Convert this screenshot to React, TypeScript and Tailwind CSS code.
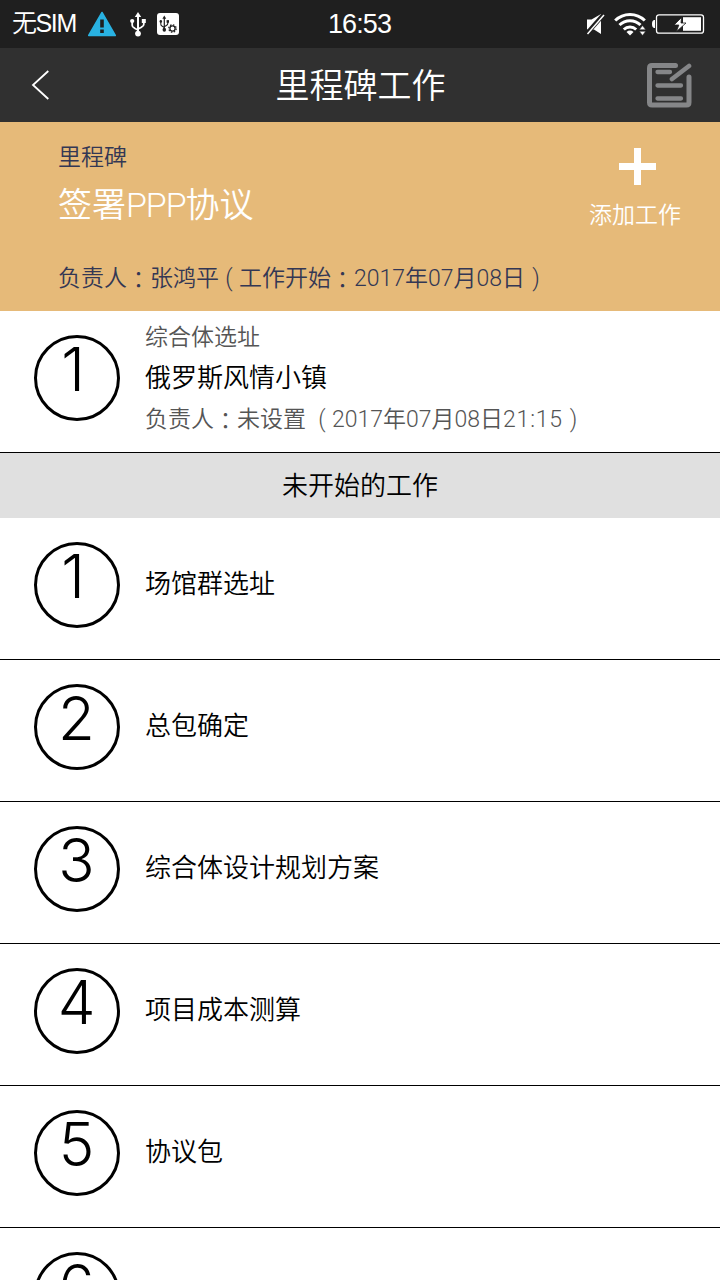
interface WorkItem {
  id: number;
  name: string;
}

const PENDING_WORKS: WorkItem[] = [
  { id: 1, name: '场馆群选址' },
  { id: 2, name: '总包确定' },
  { id: 3, name: '综合体设计规划方案' },
  { id: 4, name: '项目成本测算' },
  { id: 5, name: '协议包' },
  { id: 6, name: '' },
];

function UsbGlyph() {
  return (
    <>
      <path d="M8 3v18" stroke="currentColor" strokeWidth="2" fill="none" />
      <path d="M8 0l3.2 5H4.8z" fill="currentColor" />
      <path d="M2.2 9v4.2c0 1.6 1 2.4 2.4 3L8 18M13.8 9v3.2c0 1.6-1 2.4-2.4 3L8 17" stroke="currentColor" strokeWidth="1.8" fill="none" />
      <circle cx="2.2" cy="9" r="2.1" fill="currentColor" />
      <path d="M11.8 7h4v4h-4z" fill="currentColor" />
      <circle cx="8" cy="21.6" r="2.9" fill="currentColor" />
    </>
  );
}

function StatusBar() {
  return (
    <div className="grid h-12 shrink-0 grid-cols-3 items-center bg-[#1f1f1f] font-['Liberation_Sans','Noto_Sans_CJK_SC',sans-serif] text-white">
      <div className="flex items-center pl-[12px]">
        <span className="-mt-[2px] w-[65px] text-[25px] leading-[46px] tracking-[-1.4px] whitespace-nowrap">无SIM</span>
        <svg className="ml-[10px]" width="30" height="26" viewBox="0 0 30 26">
          <path d="M15 1.5L28.3 24.5H1.7z" fill="#29b2e2" stroke="#29b2e2" strokeWidth="1.5" strokeLinejoin="round" />
          <path d="M13.2 8.5h3.6v8h-3.6zM13.2 18.5h3.6V22h-3.6z" fill="#1f1f1f" />
        </svg>
        <svg className="ml-[13px]" width="16" height="25" viewBox="0 0 16 25">
          <UsbGlyph />
        </svg>
        <svg className="ml-[11px]" width="22" height="22" viewBox="0 0 22 22">
          <rect width="22" height="22" rx="3" fill="#fff" />
          <g transform="translate(2.5 2.5) scale(.6 .66)" className="text-[#1f1f1f]">
            <UsbGlyph />
          </g>
          <circle cx="15.5" cy="15.5" r="3.7" stroke="#1f1f1f" strokeWidth="1.3" strokeDasharray="1.5 1.4" fill="none" />
          <circle cx="15.5" cy="15.5" r="2.6" stroke="#1f1f1f" strokeWidth="1.3" fill="none" />
        </svg>
      </div>
      <span className="-mt-px pr-px text-center text-[27px] leading-[46px] tracking-[-0.9px]">16:53</span>
      <div className="flex items-center justify-end pr-[15px]">
        <svg className="mr-px" width="20" height="22" viewBox="0 0 20 22">
          <path d="M2 6.5h4.5L16 1v20l-7-4.5H2z" fill="#fff" />
          <path d="M1 21.5L19 1" stroke="#1f1f1f" strokeWidth="4.4" />
          <path d="M2.5 21L19 2" stroke="#fff" strokeWidth="1.5" />
        </svg>
        <svg className="ml-[8px]" width="33" height="24" viewBox="0 0 33 24">
          <g fill="none" stroke="#fff" strokeWidth="3">
            <path d="M1.2 8.5a21 21 0 0 1 29.6 0" />
            <path d="M5.5 13a15 15 0 0 1 21 0" />
            <path d="M9.8 17.5a9 9 0 0 1 12.4 0" />
          </g>
          <path d="M16 23.5l-3.5-3.6a5 5 0 0 1 7 0z" fill="#fff" />
          <path d="M28.5 13.5l3.3 4.3h-6.6zM28.5 23.5l3.3-4.3h-6.6z" fill="#fff" stroke="#1f1f1f" strokeWidth=".6" />
        </svg>
        <svg className="ml-[5px]" width="53" height="20" viewBox="0 0 53 20">
          <path d="M3 6v8H2Q0 13.5 0 10T2 6z" fill="#fff" />
          <rect x="4.5" y=".8" width="47" height="18.4" rx="2.5" fill="none" stroke="#fff" strokeWidth="1.3" />
          <path d="M31 3.2H49v13.6H31z" fill="#fff" />
          <path d="M29.5 3.5L22 11h4.8l-2.3 6.5L34 9h-5z" fill="#fff" stroke="#1f1f1f" strokeWidth=".8" />
        </svg>
      </div>
    </div>
  );
}

function TitleBar() {
  return (
    <header className="flex h-[74px] shrink-0 items-center justify-between bg-[#303030] pr-[28px] pl-[31px] text-white">
      <svg width="59" height="32" viewBox="0 0 59 32" fill="none" stroke="#fff" strokeWidth="1.8">
        <path d="M17.3 2L2 16l15.3 14" />
      </svg>
      <h1 className="pt-[3px] text-[34px] leading-[71px]">里程碑工作</h1>
      <svg className="ml-[16px]" width="45" height="45" viewBox="0 0 45 45" fill="none" stroke="#858688" strokeLinecap="round" strokeLinejoin="round">
        <path d="M28.5 2.5H5Q2.5 2.5 2.5 5v34.5q0 2.5 2.5 2.5H39.5q2.5 0 2.5-2.5V14" strokeWidth="5" />
        <path d="M42 3L25 16" strokeWidth="4.6" />
        <path d="M10.5 9H23M10.5 22.5H34M10.5 35.5H34" strokeWidth="4.3" />
      </svg>
    </header>
  );
}

function Colon() {
  return <span lang="zh-Hant" className="relative top-[2px] font-['Noto_Sans_CJK_TC']">：</span>;
}

function MilestoneBanner() {
  return (
    <section className="flex h-[189px] shrink-0 justify-between bg-[#e6ba79] pr-[39px] pl-[58px] text-[23px] text-[#333754]">
      <div className="flex flex-col whitespace-nowrap">
        <p className="mt-[19px] leading-[34px]">里程碑</p>
        <h2 className="mt-[5px] text-[34px] leading-[50px] text-white">
          签署<span className="tracking-[-1.1px]">PPP</span>协议
        </h2>
        <p className="mt-[29px] leading-[34px]">
          负责人<Colon />张鸿平
          <span className="inline-block w-[20px] text-center">(</span>
          工作开始<Colon />2017年07月08日
          <span className="inline-block w-[22px] text-center">)</span>
        </p>
      </div>
      <button type="button" className="flex flex-col items-center self-start pt-[26px] text-white">
        <svg className="mr-[-4px]" width="37" height="37" viewBox="0 0 37 37">
          <path d="M15 0h7v15h15v7H22v15h-7V22H0v-7h15z" fill="#fff" />
        </svg>
        <span className="mt-[14px] leading-[34px]">添加工作</span>
      </button>
    </section>
  );
}

function NumberCircle({ value }: { value: number }) {
  return (
    <div
      className={`mt-6 ml-[34px] flex h-[86px] w-[86px] shrink-0 justify-center rounded-full border-3 border-black font-[Inter] text-[60px] leading-[62px] font-light ${
        value === 1 ? 'pr-[8px]' : 'pr-px'
      }`}
    >
      {value}
    </div>
  );
}

function WorkRow({ item }: { item: WorkItem }) {
  return (
    <li className="flex h-[142px] shrink-0 border-b border-black">
      <NumberCircle value={item.id} />
      <span className="ml-[25px] pt-[46px] text-[26px] leading-[40px]">{item.name}</span>
    </li>
  );
}

export default function App() {
  return (
    <div
      lang="zh-CN"
      className="flex h-[1280px] w-[720px] flex-col overflow-hidden bg-white font-[Roboto,'Noto_Sans_CJK_SC',sans-serif] font-[350] text-black"
    >
      <StatusBar />
      <TitleBar />
      <MilestoneBanner />

      <div className="flex h-[142px] shrink-0 border-b border-black">
        <NumberCircle value={1} />
        <div className="ml-[25px] flex flex-col text-[23px] whitespace-nowrap text-[#555]">
          <p className="mt-[10px] leading-[34px]">综合体选址</p>
          <p className="mt-[3px] text-[26px] leading-[40px] text-black">俄罗斯风情小镇</p>
          <p className="mt-[2px] leading-[34px]">
            负责人<Colon />未设置
            <span className="inline-block w-[26px] pl-[6px] text-center">(</span>
            2017年07月08日<span className="tracking-[0.8px]">21:15</span>
            <span className="inline-block w-[21px] text-center">)</span>
          </p>
        </div>
      </div>

      <h3 className="h-[65px] shrink-0 bg-[#e0e0e0] pt-px text-center text-[26px] leading-[64px]">未开始的工作</h3>

      <ul className="flex flex-col">
        {PENDING_WORKS.map((item) => (
          <WorkRow key={item.id} item={item} />
        ))}
      </ul>
    </div>
  );
}
